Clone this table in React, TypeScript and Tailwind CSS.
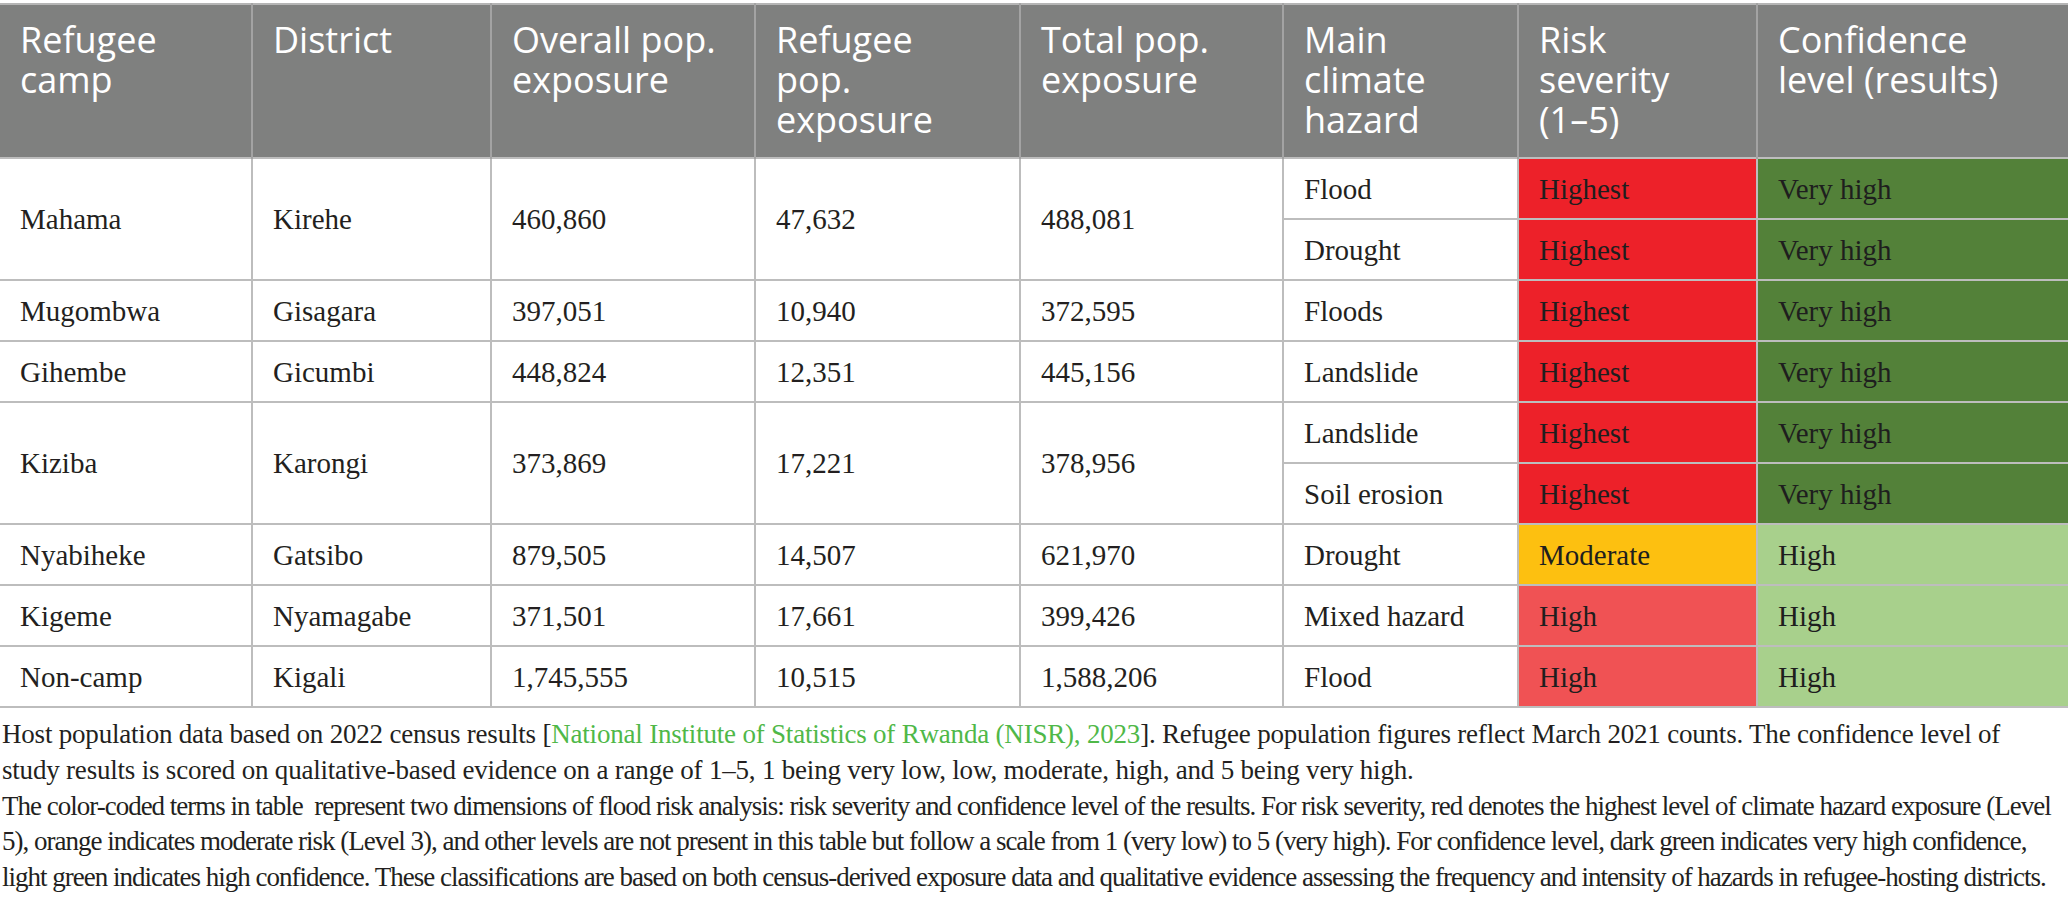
import React from 'react';

type Sub = { hazard: string; risk: 'Highest' | 'Moderate' | 'High'; conf: 'Very high' | 'High' };
type Row = { camp: string; district: string; overall: string; refugee: string; total: string; subs: Sub[] };

const rows: Row[] = [
  {
    camp: 'Mahama', district: 'Kirehe', overall: '460,860', refugee: '47,632', total: '488,081',
    subs: [
      { hazard: 'Flood', risk: 'Highest', conf: 'Very high' },
      { hazard: 'Drought', risk: 'Highest', conf: 'Very high' },
    ],
  },
  { camp: 'Mugombwa', district: 'Gisagara', overall: '397,051', refugee: '10,940', total: '372,595', subs: [{ hazard: 'Floods', risk: 'Highest', conf: 'Very high' }] },
  { camp: 'Gihembe', district: 'Gicumbi', overall: '448,824', refugee: '12,351', total: '445,156', subs: [{ hazard: 'Landslide', risk: 'Highest', conf: 'Very high' }] },
  {
    camp: 'Kiziba', district: 'Karongi', overall: '373,869', refugee: '17,221', total: '378,956',
    subs: [
      { hazard: 'Landslide', risk: 'Highest', conf: 'Very high' },
      { hazard: 'Soil erosion', risk: 'Highest', conf: 'Very high' },
    ],
  },
  { camp: 'Nyabiheke', district: 'Gatsibo', overall: '879,505', refugee: '14,507', total: '621,970', subs: [{ hazard: 'Drought', risk: 'Moderate', conf: 'High' }] },
  { camp: 'Kigeme', district: 'Nyamagabe', overall: '371,501', refugee: '17,661', total: '399,426', subs: [{ hazard: 'Mixed hazard', risk: 'High', conf: 'High' }] },
  { camp: 'Non-camp', district: 'Kigali', overall: '1,745,555', refugee: '10,515', total: '1,588,206', subs: [{ hazard: 'Flood', risk: 'High', conf: 'High' }] },
];

const riskBg = {
  Highest: 'bg-[#ed2129]',
  Moderate: 'bg-[#fdc010]',
  High: 'bg-[#f05254]',
};

const confBg = {
  'Very high': 'bg-[#538139]',
  High: 'bg-[#a8d08c]',
};

// header lines broken as in the printed table
const headers = [
  ['Refugee', 'camp'],
  ['District'],
  ['Overall pop.', 'exposure'],
  ['Refugee', 'pop.', 'exposure'],
  ['Total pop.', 'exposure'],
  ['Main', 'climate', 'hazard'],
  ['Risk', 'severity', '(1–5)'],
  ['Confidence', 'level (results)'],
];

const td = 'border-2 border-[#bdbdbd] px-[20px] align-middle h-[61px] leading-[30px]';

export default function App() {
  return (
    <div className="w-[2068px] bg-white pt-[3px] text-[#231f20] font-['Liberation_Serif',serif]">
      <table className="w-full table-fixed border-collapse text-[29px]">
        <colgroup>
          <col className="w-[252px]" />
          <col className="w-[239px]" />
          <col className="w-[264px]" />
          <col className="w-[265px]" />
          <col className="w-[263px]" />
          <col className="w-[235px]" />
          <col className="w-[239px]" />
          <col className="w-[311px]" />
        </colgroup>
        <thead>
          <tr className="bg-[#7f807f] border-t-2 border-[#b5b5b5]">
            {headers.map((h, i) => (
              <th
                key={i}
                className={`px-[20px] pt-[15px] pb-[17px] text-left align-top font-normal text-white text-[36px] leading-[40px] font-['Open_Sans',sans-serif] ${i > 0 ? 'border-l-2 border-[#a3a3a3]' : ''}`}
              >
                {h.map((line) => (
                  <div key={line} className="whitespace-nowrap">{line}</div>
                ))}
              </th>
            ))}
          </tr>
        </thead>
        <tbody>
          {rows.map((r) =>
            r.subs.map((s, j) => (
              <tr key={r.camp + j}>
                {j === 0 && (
                  <>
                    <td rowSpan={r.subs.length} className={`${td} border-l-0`}>{r.camp}</td>
                    <td rowSpan={r.subs.length} className={td}>{r.district}</td>
                    <td rowSpan={r.subs.length} className={td}>{r.overall}</td>
                    <td rowSpan={r.subs.length} className={td}>{r.refugee}</td>
                    <td rowSpan={r.subs.length} className={td}>{r.total}</td>
                  </>
                )}
                <td className={td}>{s.hazard}</td>
                <td className={`${td} ${riskBg[s.risk]} text-[#1e1e1e]`}>{s.risk}</td>
                <td className={`${td} ${confBg[s.conf]} text-[#1e1e1e] border-r-0`}>{s.conf}</td>
              </tr>
            ))
          )}
        </tbody>
      </table>

      <div className="mt-[9px] pl-[2px] text-[27px] leading-[35.75px] whitespace-nowrap">
        <p className="tracking-[-0.2px]">
          Host population data based on 2022 census results [
          <span className="text-[#4fb848]">National Institute of Statistics of Rwanda (NISR), 2023</span>
          ]. Refugee population figures reflect March 2021 counts. The confidence level of
          <br />
          study results is scored on qualitative-based evidence on a range of 1–5, 1 being very low, low, moderate, high, and 5 being very high.
        </p>
        <p className="tracking-[-1px]">
          The color-coded terms in table&nbsp; represent two dimensions of flood risk analysis: risk severity and confidence level of the results. For risk severity, red denotes the highest level of climate hazard exposure (Level
          <br />
          5), orange indicates moderate risk (Level 3), and other levels are not present in this table but follow a scale from 1 (very low) to 5 (very high). For confidence level, dark green indicates very high confidence,
          <br />
          light green indicates high confidence. These classifications are based on both census-derived exposure data and qualitative evidence assessing the frequency and intensity of hazards in refugee-hosting districts.
        </p>
      </div>
    </div>
  );
}
